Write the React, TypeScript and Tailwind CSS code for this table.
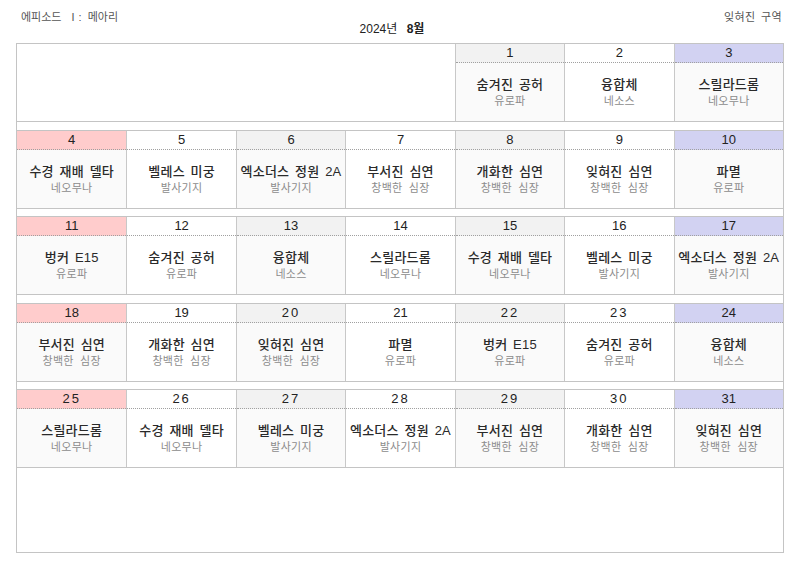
import React from 'react';

/* ────────────── Data ────────────── */
interface Stage { name: string; place: string }

const ROTATION: Stage[] = [
  { name: '숨겨진 공허', place: '유로파' },
  { name: '융합체', place: '네소스' },
  { name: '스릴라드롬', place: '네오무나' },
  { name: '수경 재배 델타', place: '네오무나' },
  { name: '벨레스 미궁', place: '발사기지' },
  { name: '엑소더스 정원 2A', place: '발사기지' },
  { name: '부서진 심연', place: '창백한 심장' },
  { name: '개화한 심연', place: '창백한 심장' },
  { name: '잊혀진 심연', place: '창백한 심장' },
  { name: '파멸', place: '유로파' },
  { name: '벙커 E15', place: '유로파' },
];

const HEAD_BG = ['bg-[#ffcccc]', 'bg-white', 'bg-[#f2f2f2]', 'bg-white', 'bg-[#f2f2f2]', 'bg-white', 'bg-[#d2d2f2]'];
const BODY_BG = ['bg-[#fafafa]', 'bg-white', 'bg-[#fafafa]', 'bg-white', 'bg-[#fafafa]', 'bg-white', 'bg-[#fafafa]'];
const SPACED = [20, 22, 23, 25, 26, 27, 28, 29, 30];

// August 2024 starts on Thursday
const WEEKS: (number | null)[][] = [
  [null, null, null, null, 1, 2, 3],
  [4, 5, 6, 7, 8, 9, 10],
  [11, 12, 13, 14, 15, 16, 17],
  [18, 19, 20, 21, 22, 23, 24],
  [25, 26, 27, 28, 29, 30, 31],
];

const FONT = { fontFamily: '"Liberation Sans", "Noto Sans CJK KR", sans-serif' };

/* ────────────── Day Cell ────────────── */
function DayCell({ day, col }: { day: number; col: number }) {
  const stage = ROTATION[(day - 1) % ROTATION.length];
  return (
    <div className={`flex flex-col ${col > 0 ? 'border-l border-[#c8c8c8]' : ''}`}>
      <div className={`h-[19px] border-b border-dotted border-[#a0a0a0] text-center text-[13px] leading-[18px] text-[#222] ${HEAD_BG[col]} ${SPACED.includes(day) ? 'tracking-[2px]' : ''}`}>
        {day}
      </div>
      <div className={`flex-1 flex flex-col items-center justify-center pt-[1px] ${BODY_BG[col]}`}>
        <p className="text-[13px] leading-[17px] font-medium text-[#2a2a2a] tracking-[0.2px] [word-spacing:2px]">{stage.name}</p>
        <p className="text-[11px] leading-[16px] text-[#8c8c8c] tracking-[0.3px] [word-spacing:3px]">{stage.place}</p>
      </div>
    </div>
  );
}

/* ────────────── Main Component ────────────── */
export default function App() {
  return (
    <div className="w-[800px] h-[566px] bg-white px-[16px]" style={FONT}>
      {/* ── Header ── */}
      <div className="h-[43px] grid grid-cols-[1fr_auto_1fr]">
        <p className="pt-[9px] pl-[5px] text-[11px] text-[#555] [word-spacing:3px]">에피소드 Ⅰ: 메아리</p>
        <p className="pt-[20px] pr-[16px] text-[12px] text-[#222]">
          2024년 <span className="ml-[6px] font-bold">8월</span>
        </p>
        <p className="pt-[9px] text-right pr-[2px] text-[11px] text-[#555] tracking-[0.4px] [word-spacing:2px]">잊혀진 구역</p>
      </div>

      {/* ── Calendar ── */}
      <div className="h-[510px] border-x border-b border-[#c4c4c4] flex flex-col gap-[7.5px]">
        {WEEKS.map((week, w) => (
          <div key={w} className="h-[79px] border-y border-[#c4c4c4] grid grid-cols-7">
            {w === 0 && <div className="col-span-4" />}
            {week.map((d, c) => (d === null ? null : <DayCell key={c} day={d} col={c} />))}
          </div>
        ))}
      </div>
    </div>
  );
}
